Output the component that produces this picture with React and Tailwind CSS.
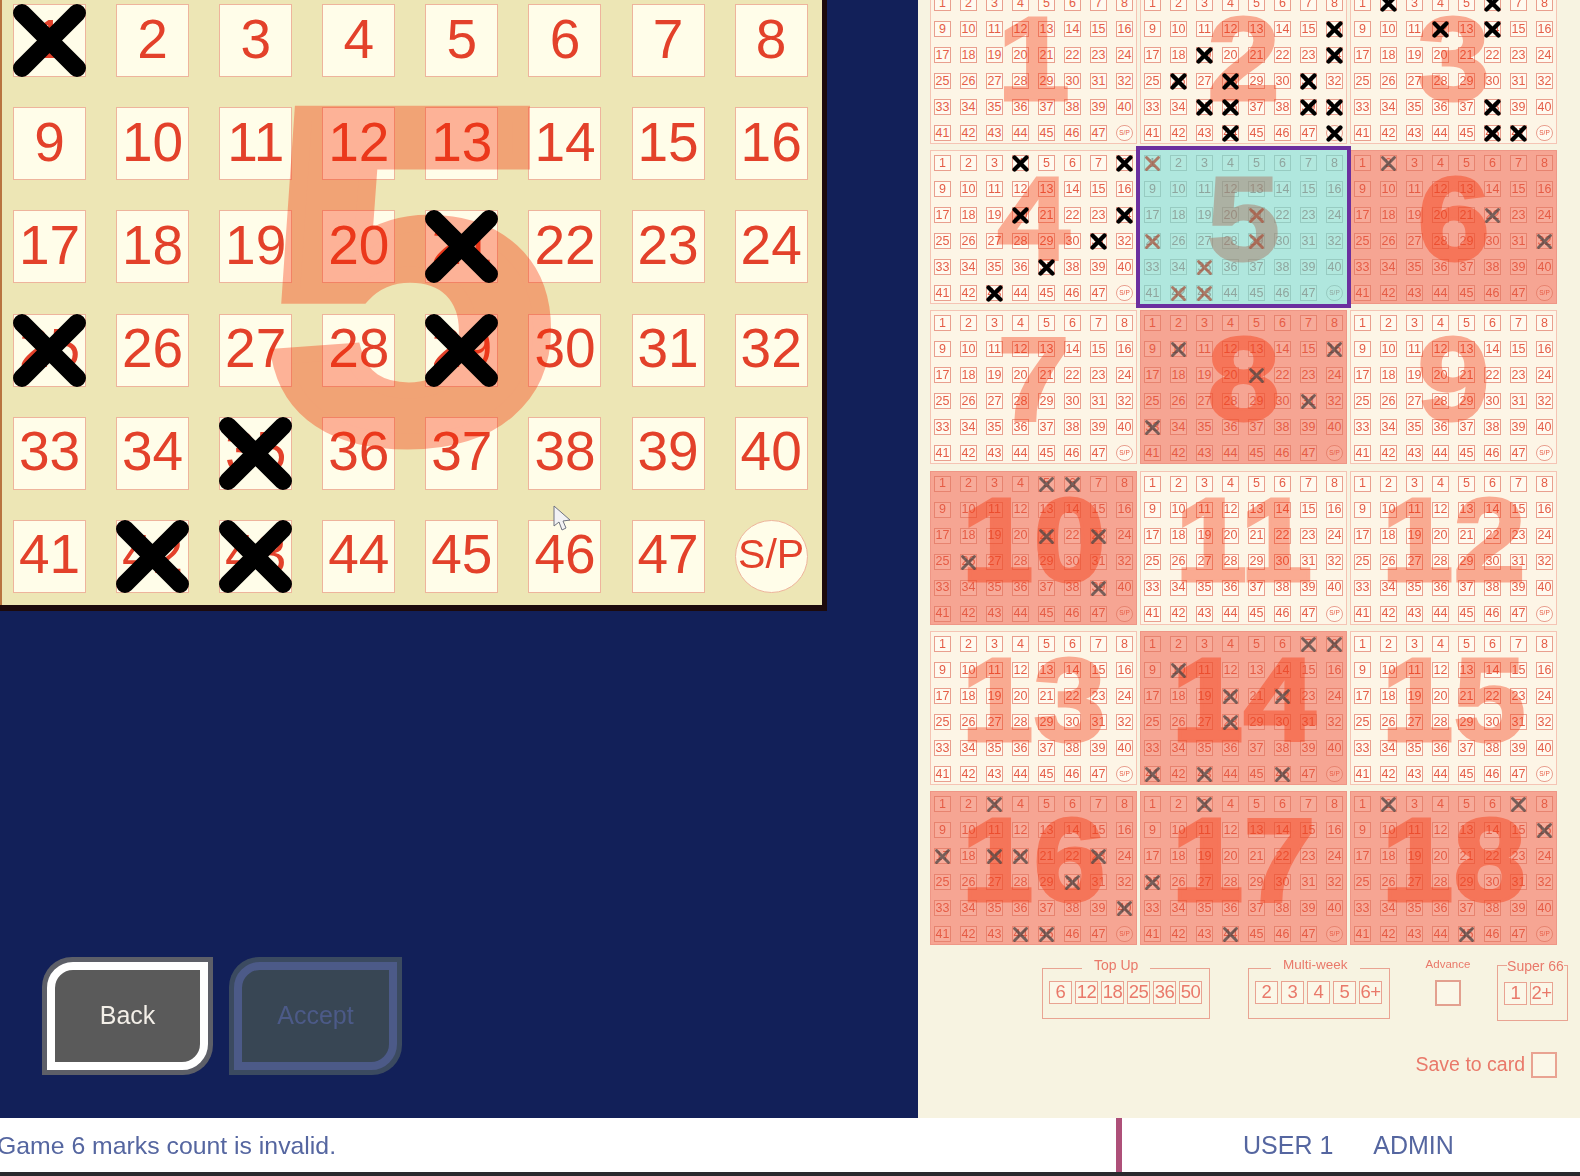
const font = { fontFamily: '"Liberation Sans", Arial, sans-serif' }

const numbers = Array.from({ length: 47 }, (_, i) => i + 1)

const bigMarks = [1, 21, 25, 29, 35, 42, 43]

const games = [
  { n: 1, marks: [] },
  { n: 2, marks: [16, 19, 24, 26, 28, 31, 35, 36, 39, 40, 44, 48] },
  { n: 3, marks: [2, 6, 12, 14, 38, 46, 47] },
  { n: 4, marks: [4, 8, 20, 24, 31, 37, 43] },
  { n: 5, marks: [1, 21, 25, 29, 35, 42, 43], kind: 'active' },
  { n: 6, marks: [2, 22, 32], kind: 'bad' },
  { n: 7, marks: [] },
  { n: 8, marks: [10, 16, 21, 31, 33], kind: 'bad' },
  { n: 9, marks: [] },
  { n: 10, marks: [5, 6, 21, 23, 26, 39], kind: 'bad' },
  { n: 11, marks: [] },
  { n: 12, marks: [] },
  { n: 13, marks: [] },
  { n: 14, marks: [7, 8, 10, 20, 22, 28, 41, 43, 46], kind: 'bad' },
  { n: 15, marks: [] },
  { n: 16, marks: [3, 17, 19, 20, 23, 30, 40, 44, 45], kind: 'bad' },
  { n: 17, marks: [3, 25, 44], kind: 'bad' },
  { n: 18, marks: [2, 7, 16, 45], kind: 'bad' },
]

const gameStyles = {
  normal: {
    box: 'bg-[#fdf5e6] border-[#f5c4b4]',
    cell: 'bg-[#fffaf0] border-[#e99f8e] text-[#e55e48]',
    digit: 'text-[#f53c14] opacity-40 [-webkit-text-stroke:3px_#f53c14]',
    mark: 'text-black',
    stroke: 5,
    markCell: '',
  },
  bad: {
    box: 'bg-[#f6a593] border-[#ef9686]',
    cell: 'bg-[#f7ab9a] border-[#e7836f] text-[#e65c45]',
    digit: 'text-[#f53c14] opacity-45 [-webkit-text-stroke:3px_#f53c14]',
    mark: 'text-[#4c4644]/75',
    stroke: 3.5,
    markCell: 'bg-[#bda396]',
  },
  active: {
    box: 'bg-[#b0e7de] border-[#b0e7de]',
    cell: 'bg-[#b2e8de] border-[#97cbc1] text-[#8fa59e]',
    digit: 'text-[#a8705c] opacity-45 [-webkit-text-stroke:3px_#a8705c]',
    mark: 'text-[#a8553f]/75',
    stroke: 3.5,
    markCell: '',
  },
}

function Cross({ stroke, className }) {
  return (
    <svg viewBox="0 0 20 20" className={`absolute -inset-px z-10 ${className}`} fill="none">
      <path d="M3 3 L17 17 M17 3 L3 17" stroke="currentColor" strokeWidth={stroke} strokeLinecap="round" />
    </svg>
  )
}

function Game({ n, marks, kind = 'normal' }) {
  const s = gameStyles[kind]
  return (
    <div className={`relative h-[154px] border px-[3px] pt-1 ${s.box} ${kind === 'active' ? 'z-20 ring-4 ring-[#6b2f9f]' : ''}`}>
      <div className="grid grid-cols-[repeat(8,17px)] grid-rows-[repeat(6,16px)] gap-x-[9px] gap-y-[10px]">
        {numbers.map((v) => (
          <div key={v} className={`relative flex items-center justify-center border text-[12.5px] leading-none ${s.cell} ${marks.includes(v) ? s.markCell : ''}`}>
            {v}
            {marks.includes(v) && <Cross stroke={s.stroke} className={s.mark} />}
          </div>
        ))}
        <div className={`relative flex items-center justify-center rounded-full border text-[6.5px] leading-none ${s.cell} ${marks.includes(48) ? s.markCell : ''}`}>
          S/P
          {marks.includes(48) && <Cross stroke={s.stroke} className={s.mark} />}
        </div>
      </div>
      <div className={`pointer-events-none absolute inset-x-0 top-[-7px] flex h-[150px] scale-x-[1.1] items-center justify-center text-[118px] leading-none font-bold ${s.digit}`}>
        {n}
      </div>
    </div>
  )
}

function BigCell({ value, marked, round }) {
  return (
    <div className={`relative flex h-[73px] w-[73px] items-center justify-center border border-[#eeb49c] bg-[#fffde9] pb-[3px] text-[#e3412a] ${round ? 'rounded-full text-[41px]' : 'text-[55px]'} leading-none`}>
      {value}
      {marked && (
        <svg viewBox="0 0 73 73" className="absolute -inset-px z-10 h-[73px] w-[73px]" fill="none">
          <path d="M9 9 L64 64 M64 9 L9 64" stroke="#000" strokeWidth="18" strokeLinecap="round" />
        </svg>
      )}
    </div>
  )
}

function OptionCells({ values }) {
  return (
    <div className="flex gap-[3px]">
      {values.map((v) => (
        <div key={v} className="flex h-[23px] w-[23px] items-center justify-center border border-[#e9a392] bg-[#fbf7e8] text-[18.5px] leading-none tracking-[-0.5px] text-[#e9796a]">
          {v}
        </div>
      ))}
    </div>
  )
}

export default function App() {
  return (
    <div className="relative flex h-screen w-screen flex-col overflow-hidden bg-[#122059]" style={font}>
      <div className="flex min-h-0 flex-1">
        {/* Left: active game */}
        <div className="flex w-[918px] shrink-0 flex-col justify-between">
          <div className="relative w-[827px] border-r-[5px] border-b-[6px] border-[#1c0a0c] blur-[0.5px]">
            <div className="grid grid-cols-[repeat(8,73px)] gap-x-[30.1px] gap-y-[30.2px] border-l-2 border-[#b9743f] bg-[#ede6b5] pt-1 pb-3 pl-[11px]">
              {numbers.map((v) => (
                <BigCell key={v} value={v} marked={bigMarks.includes(v)} />
              ))}
              <BigCell value="S/P" round />
            </div>
            <div className="pointer-events-none absolute top-[40px] left-[264px] origin-left scale-x-[1.12] text-[470px] leading-none font-bold text-[#fa2800] opacity-35 [-webkit-text-stroke:16px_#fa2800]">
              5
            </div>
          </div>

          {/* Buttons */}
          <div className="flex gap-4 pb-[43px] pl-[42px] blur-[0.4px]">
            <div className="h-[118px] w-[171px] rounded-tl-[30px] rounded-br-[30px] bg-[#5d5f68] p-[5px]">
              <div className="flex h-full items-center justify-center rounded-tl-[26px] rounded-br-[26px] border-[8px] border-white bg-[#5a5a5a] text-[25px] text-[#f3efe8]">
                Back
              </div>
            </div>
            <div className="h-[118px] w-[173px] rounded-tl-[30px] rounded-br-[30px] bg-[#3b4a60] p-[5px]">
              <div className="flex h-full items-center justify-center rounded-tl-[26px] rounded-br-[26px] border-[8px] border-[#4c5a88] bg-[#384654] text-[25px] text-[#4c5a88]">
                Accept
              </div>
            </div>
          </div>
        </div>

        {/* Right: ticket overview */}
        <div className="min-w-0 flex-1 bg-[#f7f3e1] pl-3 text-[#e9796a]">
          <div className="-mt-[10px] grid grid-cols-[repeat(3,207px)] gap-x-[3px] gap-y-[6.2px] blur-[0.7px]">
            {games.map((g) => (
              <Game key={g.n} {...g} />
            ))}
          </div>

          <div className="mt-[14px] ml-[112px] flex items-start blur-[0.4px]">
            <fieldset className="h-[60px] w-[168px] border border-[#e9a392] pl-[6px]">
              <legend className="ml-[33px] px-3 text-[14px] leading-[20px]">
                <span className="relative -top-1">Top Up</span>
              </legend>
              <div className="pt-[2px]">
                <OptionCells values={[6, 12, 18, 25, 36, 50]} />
              </div>
            </fieldset>
            <fieldset className="ml-[38px] h-[60px] w-[142px] border border-[#e9a392] pl-[6px]">
              <legend className="ml-[16px] px-3 text-[13.5px] leading-[20px]">
                <span className="relative -top-1">Multi-week</span>
              </legend>
              <div className="pt-[2px]">
                <OptionCells values={[2, 3, 4, '5', '6+']} />
              </div>
            </fieldset>
            <div className="-mt-[2px] ml-[33px] flex w-[50px] flex-col items-center">
              <div className="text-[11.5px] leading-[14px]">Advance</div>
              <div className="mt-[9px] h-[26px] w-[26px] border-2 border-[#e3a08f] bg-[#fbf7e8]" />
            </div>
            <fieldset className="-mt-[3px] ml-[24px] h-[65px] w-[71px] border border-[#e9a392] pl-[6px]">
              <legend className="mx-auto text-[14px] leading-[20px]">Super 66</legend>
              <div className="pt-[6px]">
                <OptionCells values={[1, '2+']} />
              </div>
            </fieldset>
          </div>

          <div className="mt-[31px] flex items-center justify-end gap-[6px] pr-[23px] blur-[0.4px]">
            <span className="text-[19.5px] leading-none">Save to card</span>
            <div className="h-[26px] w-[26px] border-2 border-[#e9a392] bg-[#fbf7e8]" />
          </div>
        </div>
      </div>

      {/* Status bar */}
      <div className="flex h-[54px] shrink-0 items-center bg-white text-[#5566a0] blur-[0.4px]">
        <div className="-ml-[3px] w-[1119px] pt-[2px] text-[24.8px] leading-none">Game 6 marks count is invalid.</div>
        <div className="h-full w-[6px] bg-[#ae5079]" />
        <div className="ml-[121px] text-[25px] leading-none">USER 1</div>
        <div className="ml-[40px] text-[25px] leading-none">ADMIN</div>
      </div>
      <div className="h-[4px] shrink-0 bg-[#2a2a2e]" />

      {/* Mouse pointer */}
      <svg viewBox="0 0 20 28" className="absolute top-[505px] left-[552px] h-[28px] w-[20px]">
        <path d="M2 1 L2 21 L7 17 L10 25 L14 23 L11 16 L18 15 Z" fill="#f2f2f4" stroke="#6f7380" strokeWidth="1" />
      </svg>
    </div>
  )
}
